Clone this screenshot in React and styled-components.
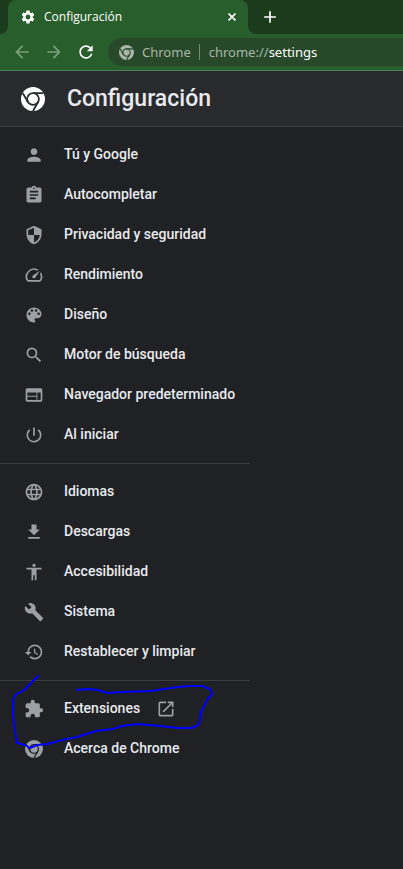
import React from 'react';
import styled, { createGlobalStyle } from 'styled-components';
import {
  MdPerson, MdAssignment, MdSecurity, MdSpeed, MdSearch, MdWeb,
  MdPowerSettingsNew, MdLanguage, MdFileDownload, MdAccessibility, MdBuild,
  MdRestore, MdExtension, MdOpenInNew, MdSettings, MdAdd,
  MdArrowBack, MdArrowForward, MdRefresh,
} from 'react-icons/md';

const GlobalStyle = createGlobalStyle`
  * { box-sizing: border-box; }
  html { background: #202124; }
  body { margin: 0; background: #202124; color: #e8eaed; font-family: Roboto, sans-serif; }
`;

const Browser = styled.div`
  min-height: 100vh;
  overflow: hidden;
`;

const TabStrip = styled.div`
  display: flex;
  height: 34px;
  background: #285e2b;
`;

const StripEnd = styled.div`
  flex: ${(p) => (p.$grow ? '1' : '0 0 8px')};
  display: flex;
  align-items: center;
  padding-left: ${(p) => (p.$grow ? '12px' : '0')};
  background: #1c3a1c;
  border-radius: ${(p) => (p.$grow ? '0 0 0 8px' : '0 0 8px 0')};
`;

const TabBack = styled.div`
  flex: 0 0 240px;
  background: linear-gradient(#1c3a1c, #1c3a1c) top / 100% 12px no-repeat;
`;

const Tab = styled.div`
  display: flex;
  align-items: center;
  height: 100%;
  padding: 0 8px 0 12px;
  border-radius: 8px 8px 0 0;
  background: #285e2b;
  color: #fff;
  font: 12px/16px "Open Sans", sans-serif;
`;

const TabTitle = styled.span`
  flex: 1;
  padding-left: 8px;
`;

const IconButton = styled.button`
  display: flex;
  align-items: center;
  justify-content: center;
  flex: none;
  width: ${(p) => p.$size}px;
  height: ${(p) => p.$size}px;
  padding: 0;
  border: 0;
  background: none;
  color: ${(p) => (p.disabled ? '#7d9f7e' : '#fff')};
`;

const Toolbar = styled.div`
  display: flex;
  align-items: center;
  height: 37px;
  padding-left: 6px;
  border-bottom: 1px solid #4d8050;
  background: #285e2b;
`;

const Omnibox = styled.div`
  display: flex;
  align-items: center;
  flex: 1;
  height: 28px;
  margin-left: 6px;
  padding-left: 11px;
  border-radius: 14px 0 0 14px;
  background: #274929;
  color: #a9b5a9;
  font: 13px/20px "Noto Sans", sans-serif;
`;

const Origin = styled.span`
  margin-left: 8px;
  padding-right: 8px;
`;

const Divider = styled.span`
  width: 1px;
  height: 16px;
  margin-right: 9px;
  background: #78907a;
`;

const Path = styled.span`
  color: #fff;
`;

const Header = styled.header`
  display: flex;
  align-items: center;
  gap: 22px;
  height: 56px;
  padding-left: 21px;
  border-bottom: 1px solid #3f4043;
  background: #292a2d;
`;

const Title = styled.h1`
  margin: 0;
  font-size: 23px;
  line-height: 32px;
  font-weight: 500;
`;

const Menu = styled.nav`
  width: 250px;
  padding-top: 8px;
`;

const Section = styled.div`
  & + & {
    margin-top: 8px;
    padding-top: 8px;
    border-top: 1px solid #3c3d41;
  }
`;

const Item = styled.a`
  display: flex;
  align-items: center;
  height: 40px;
  padding-left: 24px;
  color: #e8eaed;
  font-size: 14px;
  line-height: 20px;
  font-weight: 500;
  text-decoration: none;
  svg { flex: none; color: #9aa0a6; }
`;

const Label = styled.span`
  padding: 0 16px 2px 20px;
  white-space: nowrap;
`;

const AboutIcon = styled.span`
  display: flex;
  padding: 0 1px;
`;

const MarkedSection = styled(Section)`
  position: relative;
`;

const Scribble = styled.svg`
  position: absolute;
  top: -16px;
  left: 0;
  pointer-events: none;
`;

function ChromeLogo({ size, color = 'currentColor', gap }) {
  return (
    <svg width={size} height={size} viewBox="0 0 24 24" aria-hidden="true">
      <circle cx="12" cy="12" r="12" fill={color} />
      <circle cx="12" cy="12" r="5.9" fill="none" stroke={gap} strokeWidth="1.8" />
      <path d="M12 6.1H22.6 M6.9 15L1.7 6 M17.1 15L12 24" stroke={gap} strokeWidth="1.8" />
    </svg>
  );
}

function PaletteIcon({ size }) {
  return (
    <svg width={size} height={size} viewBox="0 0 24 24" fill="currentColor" aria-hidden="true">
      <path d="M12 3c-4.97 0-9 4.03-9 9s4.03 9 9 9c.83 0 1.5-.67 1.5-1.5 0-.39-.15-.74-.39-1.01-.23-.26-.38-.61-.38-.99 0-.83.67-1.5 1.5-1.5H16c2.76 0 5-2.24 5-5 0-4.42-4.03-8-9-8zm-5.5 9c-.83 0-1.5-.67-1.5-1.5S5.67 9 6.5 9 8 9.67 8 10.5 7.33 12 6.5 12zm3-4C8.67 8 8 7.33 8 6.5S8.67 5 9.5 5s1.5.67 1.5 1.5S10.33 8 9.5 8zm5 0c-.83 0-1.5-.67-1.5-1.5S13.67 5 14.5 5s1.5.67 1.5 1.5S15.33 8 14.5 8zm3 4c-.83 0-1.5-.67-1.5-1.5S16.67 9 17.5 9s1.5.67 1.5 1.5-.67 1.5-1.5 1.5z" />
    </svg>
  );
}

function CloseIcon() {
  return (
    <svg width="8" height="8" viewBox="0 0 8 8" aria-hidden="true">
      <path d="M0.5 0.5L7.5 7.5M7.5 0.5L0.5 7.5" stroke="currentColor" strokeWidth="1.6" />
    </svg>
  );
}

const sections = [
  [
    ['Tú y Google', MdPerson],
    ['Autocompletar', MdAssignment],
    ['Privacidad y seguridad', MdSecurity],
    ['Rendimiento', MdSpeed],
    ['Diseño', PaletteIcon],
    ['Motor de búsqueda', MdSearch],
    ['Navegador predeterminado', MdWeb],
    ['Al iniciar', MdPowerSettingsNew],
  ],
  [
    ['Idiomas', MdLanguage],
    ['Descargas', MdFileDownload],
    ['Accesibilidad', MdAccessibility],
    ['Sistema', MdBuild],
    ['Restablecer y limpiar', MdRestore],
  ],
];

export default function App() {
  return (
    <Browser>
      <GlobalStyle />
      <TabStrip>
        <StripEnd />
        <TabBack>
          <Tab>
            <MdSettings size={16} />
            <TabTitle>Configuración</TabTitle>
            <IconButton $size={16} aria-label="Cerrar"><CloseIcon /></IconButton>
          </Tab>
        </TabBack>
        <StripEnd $grow>
          <IconButton $size={20} aria-label="Nueva pestaña"><MdAdd size={20} /></IconButton>
        </StripEnd>
      </TabStrip>
      <Toolbar>
        <IconButton $size={32} disabled aria-label="Atrás"><MdArrowBack size={20} /></IconButton>
        <IconButton $size={32} disabled aria-label="Adelante"><MdArrowForward size={20} /></IconButton>
        <IconButton $size={32} aria-label="Recargar"><MdRefresh size={20} /></IconButton>
        <Omnibox>
          <ChromeLogo size={15} color="#a9b5a9" gap="#274929" />
          <Origin>Chrome</Origin>
          <Divider />
          <span>chrome://<Path>settings</Path></span>
        </Omnibox>
      </Toolbar>
      <Header>
        <ChromeLogo size={24} color="#fff" gap="#292a2d" />
        <Title>Configuración</Title>
      </Header>
      <Menu>
        {sections.map((items) => (
          <Section key={items[0][0]}>
            {items.map(([label, Icon]) => (
              <Item href="#" key={label}>
                <Icon size={20} />
                <Label>{label}</Label>
              </Item>
            ))}
          </Section>
        ))}
        <MarkedSection>
          <Item href="#">
            <MdExtension size={20} />
            <Label>Extensiones</Label>
            <MdOpenInNew size={20} />
          </Item>
          <Item href="#">
            <AboutIcon><ChromeLogo size={18} gap="#202124" /></AboutIcon>
            <Label>Acerca de Chrome</Label>
          </Item>
          <Scribble width="250" height="100" viewBox="0 665 250 100" fill="none" stroke="#00f" strokeWidth="2" strokeLinecap="round" strokeLinejoin="round" aria-hidden="true">
            <path d="M38 676L32 682L24 690L15 695L13 700L13 716L15 731L17 743L25 745L30 748L37 745L48 744L62 740L77 737L96 731L113 729L122 726L138 724L160 726L178 728L192 728L198 725L200 721L201 712L205 704L207 700L212 694L210 689L202 686L188 686L171 688L151 691L122 692L107 693L98 690L88 689L77 690" />
          </Scribble>
        </MarkedSection>
      </Menu>
    </Browser>
  );
}
